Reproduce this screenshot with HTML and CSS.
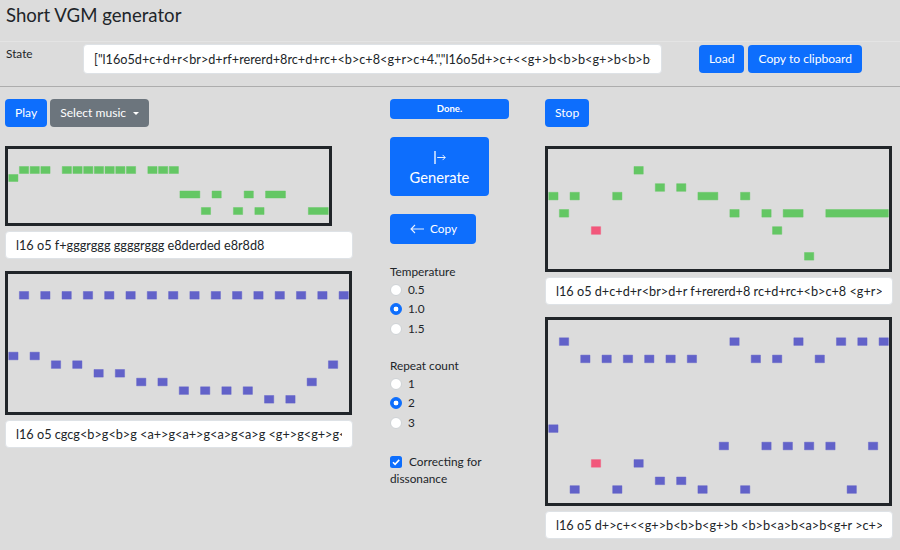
FILE: index.html
```html
<!DOCTYPE html>
<html lang="en">
<head>
<meta charset="utf-8">
<title>Short VGM generator</title>
<link rel="stylesheet" href="styles.css">
</head>
<body>
<div class="app">
  <h1 class="title">Short VGM generator</h1>

  <div class="state-row">
    <label class="state-label" for="state">State</label>
    <input id="state" class="field field-state" type="text" value="[&quot;l16o5d+c+d+r&lt;br&gt;d+rf+rererd+8rc+d+rc+&lt;b&gt;c+8&lt;g+r&gt;c+4.&quot;,&quot;l16o5d+&gt;c+&lt;&lt;g+&gt;b&lt;b&gt;b&lt;g+&gt;b&lt;b&gt;b&lt;a&gt;b&lt;a&gt;b&lt;g+r&gt;c+&gt;c+&lt;&lt;g+&gt;b&gt;c+&lt;b&gt;c+&quot;]">
    <div class="state-actions">
      <button class="btn btn-primary" type="button">Load</button>
      <button class="btn btn-primary" type="button">Copy to clipboard</button>
    </div>
  </div>

  <hr class="divider">

  <div class="main">
    <section class="col">
      <div class="toolbar">
        <button class="btn btn-primary" type="button">Play</button>
        <button class="btn btn-secondary" type="button">Select music<span class="caret"></span></button>
      </div>

      <div class="roll roll-first">
        <svg width="321" height="74" aria-hidden="true">
          <g class="notes green" transform="scale(10.7 1)">
            <rect x="0.07" y="25.5" width="0.86" height="7"/>
            <rect x="1.07" y="17.5" width="0.86" height="7"/>
            <rect x="2.07" y="17.5" width="0.86" height="7"/>
            <rect x="3.07" y="17.5" width="0.86" height="7"/>
            <rect x="5.07" y="17.5" width="0.86" height="7"/>
            <rect x="6.07" y="17.5" width="0.86" height="7"/>
            <rect x="7.07" y="17.5" width="0.86" height="7"/>
            <rect x="8.07" y="17.5" width="0.86" height="7"/>
            <rect x="9.07" y="17.5" width="0.86" height="7"/>
            <rect x="10.07" y="17.5" width="0.86" height="7"/>
            <rect x="11.07" y="17.5" width="0.86" height="7"/>
            <rect x="13.07" y="17.5" width="0.86" height="7"/>
            <rect x="14.07" y="17.5" width="0.86" height="7"/>
            <rect x="15.07" y="17.5" width="0.86" height="7"/>
            <rect x="16.07" y="42" width="1.86" height="7"/>
            <rect x="19.07" y="42" width="0.86" height="7"/>
            <rect x="22.07" y="42" width="0.86" height="7"/>
            <rect x="24.07" y="42" width="1.86" height="7"/>
            <rect x="18.07" y="58.5" width="0.86" height="7"/>
            <rect x="21.07" y="58.5" width="0.86" height="7"/>
            <rect x="23.07" y="58.5" width="0.86" height="7"/>
            <rect x="28.07" y="58.5" width="1.86" height="7"/>
          </g>
        </svg>
      </div>
      <input class="field field-mml" type="text" value="l16 o5 f+gggrggg ggggrggg e8derded e8r8d8">

      <div class="roll roll-next">
        <svg width="341" height="138" aria-hidden="true">
          <g class="notes purple" transform="scale(10.656 1)">
            <rect x="1.07" y="17.5" width="0.87" height="7.6"/>
            <rect x="3.07" y="17.5" width="0.87" height="7.6"/>
            <rect x="5.07" y="17.5" width="0.87" height="7.6"/>
            <rect x="7.07" y="17.5" width="0.87" height="7.6"/>
            <rect x="9.07" y="17.5" width="0.87" height="7.6"/>
            <rect x="11.07" y="17.5" width="0.87" height="7.6"/>
            <rect x="13.07" y="17.5" width="0.87" height="7.6"/>
            <rect x="15.07" y="17.5" width="0.87" height="7.6"/>
            <rect x="17.07" y="17.5" width="0.87" height="7.6"/>
            <rect x="19.07" y="17.5" width="0.87" height="7.6"/>
            <rect x="21.07" y="17.5" width="0.87" height="7.6"/>
            <rect x="23.07" y="17.5" width="0.87" height="7.6"/>
            <rect x="25.07" y="17.5" width="0.87" height="7.6"/>
            <rect x="27.07" y="17.5" width="0.87" height="7.6"/>
            <rect x="29.07" y="17.5" width="0.87" height="7.6"/>
            <rect x="31.07" y="17.5" width="0.87" height="7.6"/>
            <rect x="0.07" y="78.2" width="0.87" height="7.6"/>
            <rect x="2.07" y="78.2" width="0.87" height="7.6"/>
            <rect x="4.07" y="86.8" width="0.87" height="7.6"/>
            <rect x="6.07" y="86.8" width="0.87" height="7.6"/>
            <rect x="30.07" y="86.8" width="0.87" height="7.6"/>
            <rect x="8.07" y="95.5" width="0.87" height="7.6"/>
            <rect x="10.07" y="95.5" width="0.87" height="7.6"/>
            <rect x="12.07" y="104.2" width="0.87" height="7.6"/>
            <rect x="14.07" y="104.2" width="0.87" height="7.6"/>
            <rect x="28.07" y="104.2" width="0.87" height="7.6"/>
            <rect x="16.07" y="112.8" width="0.87" height="7.6"/>
            <rect x="18.07" y="112.8" width="0.87" height="7.6"/>
            <rect x="20.07" y="112.8" width="0.87" height="7.6"/>
            <rect x="22.07" y="112.8" width="0.87" height="7.6"/>
            <rect x="24.07" y="121.5" width="0.87" height="7.6"/>
            <rect x="26.07" y="121.5" width="0.87" height="7.6"/>
          </g>
        </svg>
      </div>
      <input class="field field-mml" type="text" value="l16 o5 cgcg&lt;b&gt;g&lt;b&gt;g &lt;a+&gt;g&lt;a+&gt;g&lt;a&gt;g&lt;a&gt;g &lt;g+&gt;g&lt;g+&gt;g&lt;g+&gt;g&lt;g+&gt;g &lt;g&gt;g&lt;g&gt;g&lt;a&gt;g&lt;b&gt;g">
    </section>

    <section class="col col-mid">
      <div class="progress"><div class="progress-bar" style="width:100%">Done.</div></div>

      <button class="btn btn-primary btn-generate" type="button">
        <svg width="12" height="13" viewBox="0 0 12 13" aria-hidden="true">
          <path d="M1 0V13" stroke="#fff" stroke-width="1.3" fill="none"/>
          <path d="M3.2 6.5H11.2M8.6 3.9L11.2 6.5L8.6 9.1" stroke="#fff" stroke-width="1" fill="none" stroke-opacity=".9"/>
        </svg>
        <span>Generate</span>
      </button>

      <button class="btn btn-primary btn-copy" type="button">
        <svg width="14" height="10" viewBox="0 0 14 10" aria-hidden="true">
          <path d="M1 5H14M5 1L1 5L5 9" stroke="#fff" stroke-width="1.1" fill="none" stroke-opacity=".9"/>
        </svg>
        <span>Copy</span>
      </button>

      <div class="opt-label opt-label-first">Temperature</div>
      <label class="opt"><input type="radio" name="temp">0.5</label>
      <label class="opt"><input type="radio" name="temp" checked>1.0</label>
      <label class="opt"><input type="radio" name="temp">1.5</label>

      <div class="opt-label">Repeat count</div>
      <label class="opt"><input type="radio" name="rep">1</label>
      <label class="opt"><input type="radio" name="rep" checked>2</label>
      <label class="opt"><input type="radio" name="rep">3</label>

      <label class="check-line"><span class="checkbox"><svg width="12" height="12" viewBox="0 0 12 12" aria-hidden="true"><path d="M3 6.2L5.1 8.3L9.2 3.9" stroke="#fff" stroke-width="1.6" fill="none"/></svg></span>Correcting for dissonance</label>
    </section>

    <section class="col">
      <div class="toolbar">
        <button class="btn btn-primary" type="button">Stop</button>
      </div>

      <div class="roll roll-first">
        <svg width="341" height="120" aria-hidden="true">
          <g class="notes green" transform="scale(10.656 1)">
            <rect x="8.07" y="17.5" width="0.87" height="7.6"/>
            <rect x="10.07" y="34.7" width="0.87" height="7.6"/>
            <rect x="12.07" y="34.7" width="0.87" height="7.6"/>
            <rect x="0.07" y="43.3" width="0.87" height="7.6"/>
            <rect x="2.07" y="43.3" width="0.87" height="7.6"/>
            <rect x="6.07" y="43.3" width="0.87" height="7.6"/>
            <rect x="14.07" y="43.3" width="1.87" height="7.6"/>
            <rect x="18.07" y="43.3" width="0.87" height="7.6"/>
            <rect x="1.07" y="60.5" width="0.87" height="7.6"/>
            <rect x="17.07" y="60.5" width="0.87" height="7.6"/>
            <rect x="20.07" y="60.5" width="0.87" height="7.6"/>
            <rect x="22.07" y="60.5" width="1.87" height="7.6"/>
            <rect x="26.07" y="60.5" width="5.87" height="7.6"/>
            <rect x="21.07" y="77.7" width="0.87" height="7.6"/>
            <rect x="24.07" y="103.5" width="0.87" height="7.6"/>
            <rect class="clash" x="4.07" y="77.7" width="0.87" height="7.6"/>
          </g>
        </svg>
      </div>
      <input class="field field-mml" type="text" value="l16 o5 d+c+d+r&lt;br&gt;d+r f+rererd+8 rc+d+rc+&lt;b&gt;c+8 &lt;g+r&gt;c+4.">

      <div class="roll roll-next">
        <svg width="341" height="183" aria-hidden="true">
          <g class="notes purple" transform="scale(10.656 1)">
            <rect x="1.07" y="17.8" width="0.87" height="7.6"/>
            <rect x="17.07" y="17.8" width="0.87" height="7.6"/>
            <rect x="23.07" y="17.8" width="0.87" height="7.6"/>
            <rect x="27.07" y="17.8" width="0.87" height="7.6"/>
            <rect x="29.07" y="17.8" width="0.87" height="7.6"/>
            <rect x="31.07" y="17.8" width="0.87" height="7.6"/>
            <rect x="3.07" y="35.1" width="0.87" height="7.6"/>
            <rect x="5.07" y="35.1" width="0.87" height="7.6"/>
            <rect x="7.07" y="35.1" width="0.87" height="7.6"/>
            <rect x="9.07" y="35.1" width="0.87" height="7.6"/>
            <rect x="11.07" y="35.1" width="0.87" height="7.6"/>
            <rect x="13.07" y="35.1" width="0.87" height="7.6"/>
            <rect x="19.07" y="35.1" width="0.87" height="7.6"/>
            <rect x="21.07" y="35.1" width="0.87" height="7.6"/>
            <rect x="25.07" y="35.1" width="0.87" height="7.6"/>
            <rect x="0.07" y="104.8" width="0.87" height="7.6"/>
            <rect x="16.07" y="122.2" width="0.87" height="7.6"/>
            <rect x="20.07" y="122.2" width="0.87" height="7.6"/>
            <rect x="22.07" y="122.2" width="0.87" height="7.6"/>
            <rect x="24.07" y="122.2" width="0.87" height="7.6"/>
            <rect x="26.07" y="122.2" width="0.87" height="7.6"/>
            <rect x="30.07" y="122.2" width="0.87" height="7.6"/>
            <rect x="8.07" y="139.6" width="0.87" height="7.6"/>
            <rect x="10.07" y="157" width="0.87" height="7.6"/>
            <rect x="12.07" y="157" width="0.87" height="7.6"/>
            <rect x="2.07" y="165.7" width="0.87" height="7.6"/>
            <rect x="6.07" y="165.7" width="0.87" height="7.6"/>
            <rect x="14.07" y="165.7" width="0.87" height="7.6"/>
            <rect x="18.07" y="165.7" width="0.87" height="7.6"/>
            <rect x="28.07" y="165.7" width="0.87" height="7.6"/>
            <rect class="clash" x="4.07" y="139.6" width="0.87" height="7.6"/>
          </g>
        </svg>
      </div>
      <input class="field field-mml" type="text" value="l16 o5 d+&gt;c+&lt;&lt;g+&gt;b&lt;b&gt;b&lt;g+&gt;b &lt;b&gt;b&lt;a&gt;b&lt;a&gt;b&lt;g+r &gt;c+&gt;c+&lt;&lt;g+&gt;b&gt;c+&lt;b&gt;c+&gt;c+&lt;">
    </section>
  </div>
</div>
</body>
</html>
```

FILE: styles.css
```css
*,
*::before,
*::after {
  box-sizing: border-box;
}

html,
body {
  margin: 0;
}

body {
  background: #dcdcdc;
  color: #212529;
  font-family: Lato, "Open Sans", "Liberation Sans", sans-serif;
  font-size: 11.8px;
  line-height: 1.5;
}

.app {
  padding: 4px 5px 0;
}

.title {
  margin: 0 0 15px;
  padding-left: 1px;
  font-size: 18.6px;
  font-weight: 400;
  line-height: 22px;
}

/* state row */
.state-row {
  display: flex;
  align-items: flex-start;
  margin: 0 -5px;
  padding: 2px 5px 0;
  border-top: 1px solid #e4e4e4;
}

.state-label {
  flex: 0 0 78px;
  padding-left: 1px;
  line-height: 19px;
}

.field-state {
  flex: 0 0 579px;
}

.state-actions {
  display: flex;
  gap: 4px;
  margin-left: 37px;
  align-self: center;
}

.field {
  display: block;
  width: 100%;
  margin: 0;
  padding: 0 10px;
  border: 1px solid #dee2e6;
  border-radius: 4px;
  background: #fff;
  color: #212529;
  font: inherit;
  font-size: 12.7px;
  outline: none;
}

.field-state {
  height: 30px;
}

.field-mml {
  height: 28px;
  margin-top: 5px;
}

.divider {
  margin: 12px -5px;
  border: 0;
  border-top: 1px solid #adadad;
  height: 0;
}

/* columns */
.main {
  display: grid;
  grid-template-columns: 348px 120px 348px;
  column-gap: 36px;
}

.col-mid {
  padding-left: 1px;
}

.toolbar {
  display: flex;
  gap: 3px;
}

.btn {
  display: inline-flex;
  align-items: center;
  justify-content: center;
  height: 28px;
  margin: 0;
  padding: 0 10px;
  border: 0;
  border-radius: 4px;
  color: #fff;
  font: inherit;
  font-size: 12.1px;
  line-height: 1;
  white-space: nowrap;
  cursor: pointer;
}

.btn-primary {
  background: #0d6efd;
}

.btn-secondary {
  background: #6c757d;
}

.caret {
  display: inline-block;
  margin-left: 7px;
  border-top: 3.5px solid #fff;
  border-left: 3px solid transparent;
  border-right: 3px solid transparent;
}

/* piano rolls */
.roll {
  width: max-content;
  border: 3px solid #212529;
}

.roll svg {
  display: block;
}

.roll-first {
  margin-top: 19px;
}

.roll-next {
  margin-top: 12px;
}

.notes rect {
  vector-effect: non-scaling-stroke;
  stroke-width: 1px;
  stroke-opacity: 0.45;
}

.green rect {
  fill: #64c764;
  stroke: #64c764;
}

.purple rect {
  fill: #6262c9;
  stroke: #6262c9;
}

.notes rect.clash {
  fill: #f2577b;
  stroke: #f2577b;
}

/* middle column */
.progress {
  display: flex;
  height: 20px;
  border-radius: 4px;
  background: #e9ecef;
  overflow: hidden;
}

.progress-bar {
  display: flex;
  align-items: center;
  justify-content: center;
  background: #0d6efd;
  color: #fff;
  font-size: 9.5px;
  font-weight: 700;
}

.btn-generate {
  display: flex;
  flex-direction: column;
  justify-content: flex-start;
  width: 99px;
  height: 59px;
  margin-top: 18px;
  padding: 13.5px 0 0;
  font-size: 14.7px;
}

.btn-generate svg {
  display: block;
  margin-left: 1px;
}

.btn-generate span {
  display: block;
  margin-top: 3.5px;
  line-height: 20px;
}

.btn-copy {
  display: flex;
  gap: 6px;
  width: max-content;
  height: 30px;
  margin-top: 18px;
  padding: 0 19px 0 20px;
  font-size: 11.8px;
}

.btn-copy svg {
  display: block;
}

.opt-label {
  margin-top: 18.5px;
  line-height: 17px;
}

.opt-label-first {
  margin-top: 19px;
}

.opt {
  display: flex;
  align-items: center;
  gap: 6px;
  height: 19.5px;
}

.opt input {
  appearance: none;
  -webkit-appearance: none;
  width: 12px;
  height: 12px;
  margin: 0;
  border: 1px solid #cfd3d6;
  border-radius: 50%;
  background: #fff;
}

.opt input:checked {
  border-color: #0d6efd;
  background: radial-gradient(circle, #fff 0 2.1px, #0d6efd 2.7px);
}

.check-line {
  display: block;
  margin-top: 20.5px;
  line-height: 17px;
}

.checkbox {
  display: inline-block;
  width: 12px;
  height: 12px;
  margin-right: 7px;
  border-radius: 2.5px;
  background: #0d6efd;
  vertical-align: -1.5px;
}

.checkbox svg {
  display: block;
}
```
